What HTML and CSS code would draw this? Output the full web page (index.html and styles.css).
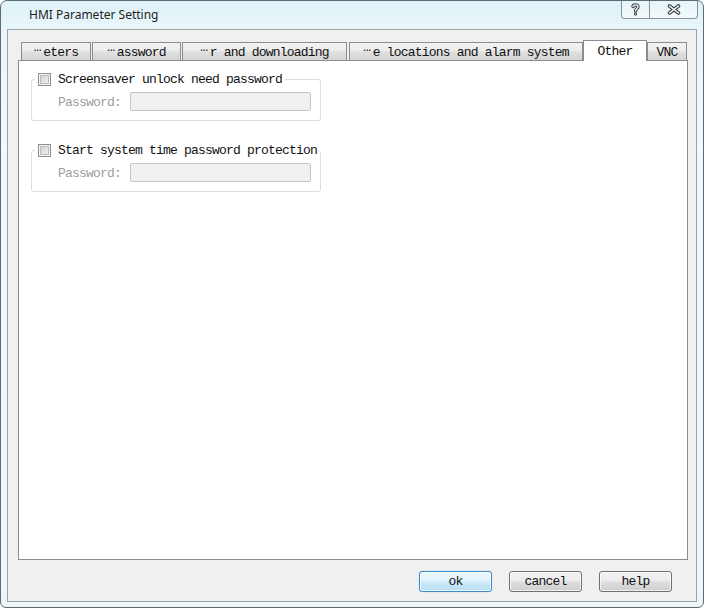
FILE: index.html
```html
<!DOCTYPE html>
<html>
<head>
<meta charset="utf-8">
<link rel="stylesheet" href="styles.css">
</head>
<body>
<div class="window">
  <div class="titlebar">
    <span class="title">HMI Parameter Setting</span>
    <div class="caption">
      <div class="cbtn help">
        <svg width="9" height="13" viewBox="0 0 9 13">
          <path d="M2 3.6 C2 1.4 7 1.2 7 3.8 C7 5.6 4.5 5.9 4.5 7.9" fill="none" stroke="#3d4045" stroke-width="3.4" stroke-linecap="round"/>
          <circle cx="4.5" cy="10.9" r="1.7" fill="#3d4045"/>
          <path d="M2 3.6 C2 1.4 7 1.2 7 3.8 C7 5.6 4.5 5.9 4.5 7.9" fill="none" stroke="#fff" stroke-width="1.3" stroke-linecap="round"/>
          <circle cx="4.5" cy="10.9" r="0.7" fill="#fff"/>
        </svg>
      </div>
      <div class="cbtn close">
        <svg width="14" height="11" viewBox="0 0 14 11">
          <path d="M2.5 2 L11.5 9 M11.5 2 L2.5 9" fill="none" stroke="#3d4045" stroke-width="3.6" stroke-linecap="round"/>
          <path d="M2.5 2 L11.5 9 M11.5 2 L2.5 9" fill="none" stroke="#fff" stroke-width="1.5" stroke-linecap="round"/>
        </svg>
      </div>
    </div>
  </div>
  <div class="client">
    <div class="tabs">
      <div class="tab t1"><span class="ell">…</span>eters</div>
      <div class="tab t2"><span class="ell">…</span>assword</div>
      <div class="tab t3"><span class="ell">…</span>r and downloading</div>
      <div class="tab t4"><span class="ell">…</span>e locations and alarm system</div>
      <div class="tab t5 sel">Other</div>
      <div class="tab t6">VNC</div>
    </div>
    <div class="panel">
      <fieldset class="group">
        <legend><span class="chk"></span><span class="cap">Screensaver unlock need password</span></legend>
        <div class="row"><span class="lbl">Password:</span><span class="input"></span></div>
      </fieldset>
      <fieldset class="group second">
        <legend><span class="chk"></span><span class="cap">Start system time password protection</span></legend>
        <div class="row"><span class="lbl">Password:</span><span class="input"></span></div>
      </fieldset>
    </div>
    <div class="buttons">
      <div class="btn ok">ok</div>
      <div class="btn">cancel</div>
      <div class="btn">help</div>
    </div>
  </div>
</div>
</body>
</html>
```
FILE: styles.css
```css
html, body {
  margin: 0;
  padding: 0;
  background: #ffffff;
}

.window {
  width: 704px;
  height: 608px;
  box-sizing: border-box;
  border: 1px solid #5f6a72;
  border-radius: 7px 7px 6px 6px;
  background: linear-gradient(180deg, #def2f8 0px, #e9f6fa 28px, #f3f8fa 140px, #eef6f9 100%);
  display: flex;
  flex-direction: column;
  overflow: hidden;
}

.titlebar {
  flex: none;
  height: 28px;
  display: flex;
  align-items: flex-start;
  justify-content: space-between;
}

.title {
  font-family: "Segoe UI", "Noto Sans", sans-serif;
  font-size: 12px;
  line-height: 16px;
  color: #1e1e1e;
  margin: 6px 0 0 28px;
}

.caption {
  display: flex;
  height: 17px;
  margin-right: 5px;
  border: 1px solid #8a9097;
  border-top: none;
  border-radius: 0 0 4px 4px;
  background: linear-gradient(180deg, rgba(255,255,255,0.2), rgba(255,255,255,0.55));
}

.cbtn {
  display: flex;
  align-items: center;
  justify-content: center;
}

.help {
  width: 27px;
  border-right: 1px solid #8a9097;
}

.close {
  width: 47px;
}

.client {
  flex: 1;
  margin: 0 6px 5px;
  border: 1px solid #9ba3a9;
  background: #f0f0f0;
  display: flex;
  flex-direction: column;
  padding: 10px 8px 0 10px;
}

.tabs {
  flex: none;
  height: 20px;
  display: flex;
  align-items: flex-end;
  padding-left: 3px;
  position: relative;
  z-index: 1;
}

.tab,
.cap,
.lbl,
.btn {
  font-family: "Liberation Mono", "DejaVu Sans Mono", monospace;
  font-size: 13px;
  letter-spacing: -0.8px;
  color: #111;
}

.tab {
  box-sizing: border-box;
  height: 18px;
  border: 1px solid #898c95;
  border-bottom: none;
  background: linear-gradient(180deg, #f3f3f3 0%, #ececec 45%, #e0e0e0 52%, #d4d4d4 100%);
  text-align: center;
  line-height: 16px;
  padding-top: 2px;
  white-space: nowrap;
}

.ell {
  letter-spacing: 1.5px;
  vertical-align: 5px;
  line-height: 0;
}

.t1 { width: 70px; margin-right: 1px; }
.t2 { width: 89px; margin-right: 1px; }
.t3 { width: 165px; margin-right: 2px; }
.t4 { width: 234px; }
.t5 { width: 64px; }
.t6 { width: 40px; }

.tab.sel {
  height: 21px;
  margin-bottom: -1px;
  background: #ffffff;
  padding-top: 3px;
}

.panel {
  flex: none;
  height: 500px;
  box-sizing: border-box;
  border: 1px solid #898c95;
  background: #ffffff;
  padding: 12px 0 0 12px;
}

.group {
  margin: 0;
  width: 290px;
  box-sizing: border-box;
  border: 1px solid #d5dfe5;
  border-radius: 3px;
  padding: 0 0 9px 3px;
}

.group.second {
  margin-top: 23px;
}

.group legend {
  padding: 0 3px;
  height: 13px;
  display: flex;
  align-items: center;
  gap: 7px;
  white-space: nowrap;
}

.chk {
  flex: none;
  width: 13px;
  height: 13px;
  box-sizing: border-box;
  border: 1px solid #8e8f8f;
  background: linear-gradient(135deg, #c5c9cf 0%, #e2e4e7 55%, #f6f6f6 100%);
  box-shadow: inset 0 0 0 1px #f4f4f4, inset 0 0 0 2px #b9bdc3;
}

.cap {
  line-height: 13px;
}

.row {
  display: flex;
  align-items: flex-start;
  margin-top: 6px;
  padding-left: 23px;
}

.lbl {
  color: #9d9d9d;
  line-height: 13px;
  padding-top: 4px;
  width: 72px;
}

.input {
  width: 181px;
  height: 19px;
  box-sizing: border-box;
  border: 1px solid #c2c5c8;
  border-radius: 2px;
  background: #f0f0f0;
}

.buttons {
  flex: none;
  display: flex;
  justify-content: flex-end;
  gap: 17px;
  margin-top: 11px;
  padding-right: 16px;
}

.btn {
  width: 73px;
  height: 21px;
  box-sizing: border-box;
  border: 1px solid #707070;
  border-radius: 3px;
  background: linear-gradient(180deg, #f2f2f2 0%, #ebebeb 48%, #dddddd 52%, #cfcfcf 100%);
  box-shadow: inset 0 0 0 1px rgba(255,255,255,0.7);
  display: flex;
  align-items: center;
  justify-content: center;
  line-height: 13px;
}

.btn.ok {
  border-color: #3c8ccc;
  background: linear-gradient(180deg, #eef8fe 0%, #e0f2fd 48%, #cde9fa 52%, #b7def6 100%);
  box-shadow: inset 0 0 0 1px rgba(255,255,255,0.8), 0 0 1px #7cc3f0;
}
```
